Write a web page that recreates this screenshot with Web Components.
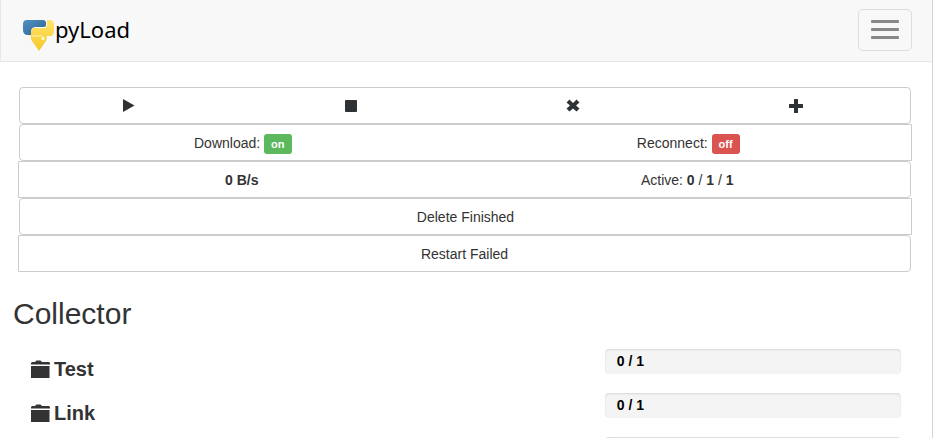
<!DOCTYPE html>
<html lang="en">
<head>
<meta charset="utf-8">
<title>pyLoad</title>
<style>
html{height:100%}
body{margin:0;height:100%;overflow:hidden;background:#fff;color:#333;font:14px/20px "Liberation Sans",Arial,sans-serif}
</style>
</head>
<body>
<py-app></py-app>
<script>
const define=(name,html,setup)=>customElements.define(name,class extends HTMLElement{
  constructor(){
    super();
    const t=document.createElement('template');
    t.innerHTML=html;
    this.attachShadow({mode:'open'}).append(t.content.cloneNode(true));
  }
  connectedCallback(){ if(setup) setup(this,this.shadowRoot); }
});

const glyphs={
  play:'<path d="M2 1 13.500 7.500 2 14z"/>',
  stop:'<rect x="1" y="2" width="12" height="12" rx="1"/>',
  remove:'<path d="M3.500 1.500 7 5l3.500-3.500 3 3L10 7.500l3.500 3-3 3L7 10.500l-3.500 3-3-3 3.500-3-3.500-3z"/>',
  plus:'<path d="M5.500 1h3a.5.5 0 0 1 .5.5V6H13.500a.5.5 0 0 1 .5.5v3a.5.5 0 0 1-.5.5H9v4.500a.5.5 0 0 1-.5.5H5.500a.5.5 0 0 1-.5-.5V10H.5a.5.5 0 0 1-.5-.5v-3A.5.5 0 0 1 .5 6H5V1.500a.5.5 0 0 1 .5-.5z"/>'
};

define('py-glyph',`<style>:host{display:inline-block;width:14px;height:15px;margin-right:6px;vertical-align:-2px}svg{display:block;fill:#2f3234}</style><svg width="14" height="15" viewBox="0 0 14 15" aria-hidden="true"></svg>`,
  (h,r)=>{r.querySelector('svg').innerHTML=glyphs[h.getAttribute('name')]});

define('py-logo',`<style>
:host{display:block}
a{display:flex;align-items:flex-start;color:#000;text-decoration:none;font:22px/30px "Noto Sans",sans-serif}
svg{display:block;margin-top:5px}
</style>
<a href="#" aria-label="pyLoad"><svg width="33" height="33" viewBox="0 0 33 33" aria-hidden="true">
<defs><linearGradient id="b" x2="1" y2="1"><stop stop-color="#5290c2"/><stop offset="1" stop-color="#2c628f"/></linearGradient>
<linearGradient id="y" x2="0" y2="1"><stop stop-color="#ffe36b"/><stop offset="1" stop-color="#f6c928"/></linearGradient></defs>
<path fill="url(#b)" d="M5 1h16q3 0 3 3v2q0 2-2 2h-8q-5 0-5 5v3H6q-5 0-5-5V5q0-4 4-4z"/>
<path fill="url(#y)" d="M25 1h2q5 0 5 5v6q0 5-4 5h-4q1 1 1 2 0 1-1 3l-7 10-7-10q-1-1-1-3v-6q0-4 4-4h9q3 0 3-4z"/>
<path d="M10 17h11" stroke="#fff3b0" stroke-width="1"/><circle cx="21" cy="19.500" r="1.500" fill="#fffdf0"/>
</svg><span>pyLoad</span></a>`);

define('py-navbar',`<style>
:host{display:flex;justify-content:space-between;align-items:flex-start;box-sizing:border-box;height:62px;padding:9px 20px 0 21px;background:#f8f8f8;border:solid #e7e7e7;border-width:0 0 1px 1px}
py-logo{padding-top:5px}
button{display:flex;flex-direction:column;align-items:center;justify-content:center;gap:5px;width:54px;height:42px;padding:0 0 2px;border:1px solid #ddd;border-radius:5px;background:transparent}
i{display:block;width:28px;height:3px;border-radius:1px;background:#888}
</style><py-logo></py-logo><button type="button" aria-label="Toggle navigation"><i></i><i></i><i></i></button>`);

define('py-row',`<style>
:host{display:flex;margin:0 1px;border:1px solid #ccc;border-radius:4px;box-sizing:border-box;height:37px}
:host([square=left]){margin-left:0;border-radius:0 4px 4px 0}
:host([square=right]){margin-right:0;border-radius:4px 0 0 4px}
::slotted(*){flex:1 1 0}
::slotted(*+*){border-left:1px solid #ccc}
</style><slot></slot>`);

define('py-button',`<style>
:host{display:block}
button{display:block;width:100%;height:100%;border:0;padding:1px 0 0;background:none;color:#333;font:inherit;cursor:pointer}
</style><button type="button"><slot></slot></button>`,
 (h,r)=>{const l=h.getAttribute('label'); if(l) r.querySelector('button').setAttribute('aria-label',l)});

define('py-state',`<style>
:host{display:inline-block;padding:3px 7px;border-radius:3px;color:#fff;background:#5cb85c;font-size:11px;line-height:14px;font-weight:bold;vertical-align:baseline}
:host([off]){background:#d9534f}
</style><slot></slot>`);

define('py-package',`<style>
:host{display:grid;grid-template-columns:66fr 34fr;height:44px}
h4{display:flex;align-items:center;gap:4px;height:24px;margin:8px 0 0 1px;font-size:20px;line-height:24px;font-weight:bold}
svg{display:block;fill:#333}
div{box-sizing:border-box;height:25px;padding:2px 12px;border-radius:4px;background:#f4f4f4;box-shadow:inset 0 1px 2px rgba(0,0,0,.12);color:#000;font-weight:bold}
</style><h4><svg width="19" height="18" viewBox="0 0 19 18" aria-hidden="true"><path d="M0 4.500V3l1-1h3l1.500-1.500h4L11 2h7l1 1v1.500zM0 6h18.500v12H0z"/></svg><slot></slot></h4><div><slot name="progress"></slot></div>`);

define('py-app',`<style>
:host{display:block;box-sizing:border-box;height:100vh;overflow:hidden;border-right:1px solid #d6d6cc}
.controls{padding:25px 20px 0 18px}
h2{margin:23px 13px 16px;font-size:30px;line-height:38px;font-weight:normal}
.list{padding:0 31px 0 30px}
</style>
<py-navbar></py-navbar>
<main>
<div class="controls">
<py-row><py-button label="Start"><py-glyph name="play"></py-glyph></py-button><py-button label="Stop"><py-glyph name="stop"></py-glyph></py-button><py-button label="Cancel"><py-glyph name="remove"></py-glyph></py-button><py-button label="Add"><py-glyph name="plus"></py-glyph></py-button></py-row>
<py-row square="right"><py-button>Download: <py-state>on</py-state></py-button><py-button>Reconnect: <py-state off>off</py-state></py-button></py-row>
<py-row square="left"><py-button><b>0 B/s</b></py-button><py-button>Active: <b>0</b> / <b>1</b> / <b>1</b></py-button></py-row>
<py-row square="right"><py-button>Delete Finished</py-button></py-row>
<py-row square="left"><py-button>Restart Failed</py-button></py-row>
</div>
<h2>Collector</h2>
<div class="list">
<py-package>Test<span slot="progress">0 / 1</span></py-package>
<py-package>Link<span slot="progress">0 / 1</span></py-package>
<py-package></py-package>
</div>
</main>`);
</script>
</body>
</html>
